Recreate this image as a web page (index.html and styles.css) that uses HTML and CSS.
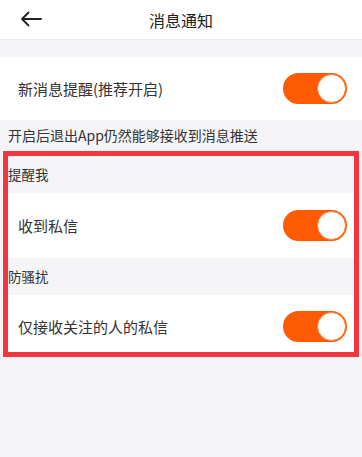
FILE: index.html
```html
<!DOCTYPE html>
<html lang="zh-CN">
<head>
    <meta charset="UTF-8">
    <meta name="viewport" content="width=device-width, initial-scale=1.0">
    <title>消息通知</title>
    <link rel="stylesheet" href="styles.css">
</head>
<body>
    <header class="topbar">
        <span class="back">
            <svg width="22" height="16" viewBox="0 0 22 16">
                <path d="M21 8H2M8.5 1.5L2 8l6.5 6.5" fill="none" stroke="#222" stroke-width="1.8" stroke-linecap="round" stroke-linejoin="round"/>
            </svg>
        </span>
        <h1>消息通知</h1>
    </header>

    <div class="spacer"></div>

    <div class="row row-main">
        <span>新消息提醒(推荐开启)</span>
        <span class="switch on"></span>
    </div>
    <p class="note">开启后退出App仍然能够接收到消息推送</p>

    <section class="marked">
        <div class="group-title group-first">提醒我</div>
        <div class="row row-inner">
            <span>收到私信</span>
            <span class="switch on"></span>
        </div>
        <div class="group-title">防骚扰</div>
        <div class="row row-last">
            <span>仅接收关注的人的私信</span>
            <span class="switch on"></span>
        </div>
    </section>
</body>
</html>
```

FILE: styles.css
```css
:root {
    --bg: #f5f5f7;
    --text: #333;
    --orange: #fd5a02;
    --mark: #f3353d;
}

body {
    margin: 0;
    font-family: "Noto Sans CJK SC", "Noto Sans", sans-serif;
    background-color: var(--bg);
    color: var(--text);
}

.topbar {
    height: 39px;
    background-color: #fff;
    border-bottom: 1px solid #ececec;
    display: flex;
    align-items: center;
    justify-content: center;
    position: relative;
}

.back {
    position: absolute;
    left: 20px;
    top: 11px;
    display: flex;
}

.topbar h1 {
    margin: 0;
    font-size: 16px;
    font-weight: normal;
    color: #222;
}

.spacer {
    height: 17px;
}

.row {
    background-color: #fff;
    display: flex;
    align-items: center;
    justify-content: space-between;
    font-size: 15px;
    padding: 0 15px 0 18px;
}

.row-main {
    height: 63px;
}

.note {
    margin: 0;
    height: 31px;
    line-height: 31px;
    padding-left: 8px;
    font-size: 14px;
}

.marked {
    margin: 0 3px;
    border: 5px solid var(--mark);
}

.marked .row {
    padding: 0 7px 0 10px;
}

.group-title {
    height: 37px;
    line-height: 37px;
    font-size: 13.5px;
}

.row-inner {
    height: 65px;
}

.row-last {
    height: 57px;
    box-sizing: border-box;
    padding-top: 5px !important;
}

.switch {
    width: 64px;
    height: 31px;
    border-radius: 16px;
    background-color: var(--orange);
    position: relative;
    flex-shrink: 0;
}

.switch::after {
    content: "";
    position: absolute;
    right: 1px;
    top: 1px;
    width: 27px;
    height: 27px;
    border-radius: 50%;
    background-color: #fff;
    border: 1px solid #f08040;
}
```
